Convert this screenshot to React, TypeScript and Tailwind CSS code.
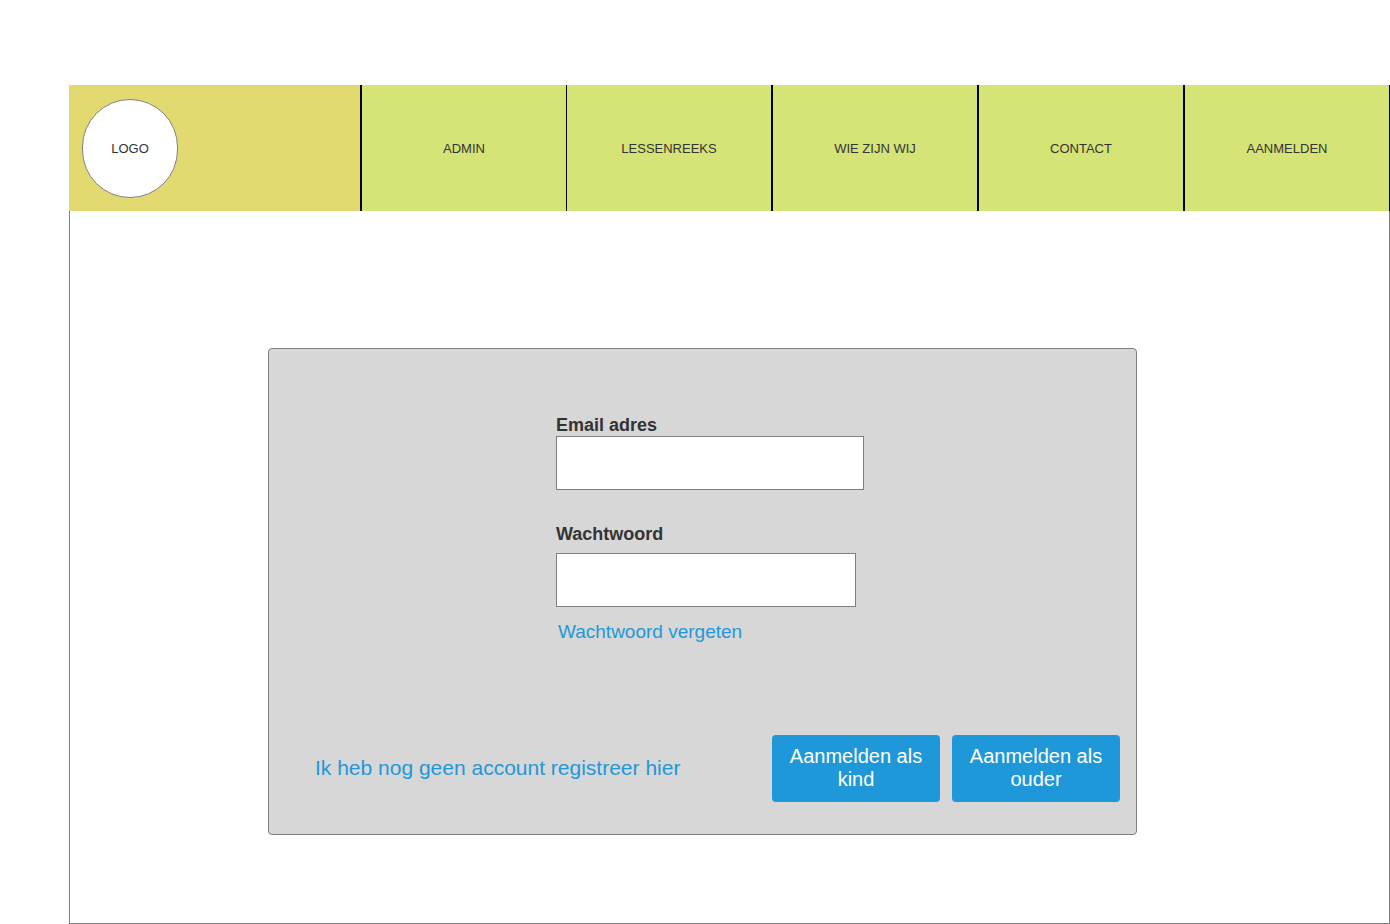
const FONT = "font-['Liberation_Sans',Arial,sans-serif]";

const navItems = [
  { label: "ADMIN", cls: "w-[205px] border-r-1" },
  { label: "LESSENREEKS", cls: "w-[206px] border-r-2" },
  { label: "WIE ZIJN WIJ", cls: "w-[206px] border-r-2" },
  { label: "CONTACT", cls: "w-[206px] border-r-2" },
  { label: "AANMELDEN", cls: "w-[205px] border-r-1" },
];

export default function App() {
  return (
    <div className={`${FONT} h-[924px] w-[1390px] overflow-hidden bg-white pl-[69px] pt-[85px] text-[#333333]`}>
      <header className="flex h-[126px] w-[1321px]">
        <div className="flex w-[293px] items-center border-r-2 border-black bg-[#e3d971] pl-[13px]">
          <div className="flex h-[99px] w-[96px] items-center justify-center rounded-full border border-[#808080] bg-white pt-[2px] text-[13px]">
            LOGO
          </div>
        </div>
        {navItems.map((item) => (
          <div
            key={item.label}
            className={`flex items-center justify-center border-black bg-[#d6e376] pt-[2px] text-[13px] ${item.cls}`}
          >
            {item.label}
          </div>
        ))}
      </header>
      <main className="h-[713px] w-[1321px] border-x border-b border-[#808080] pl-[198px] pt-[137px]">
        <section className="flex h-[487px] w-[869px] flex-col rounded-[4px] border border-[#808080] bg-[#d7d7d7]">
          <div className="flex flex-col items-start pl-[287px] pt-[66px]">
            <label className="text-[18px] leading-[21px] font-bold">Email adres</label>
            <div className="h-[54px] w-[308px] border border-[#808080] bg-white" />
            <label className="mt-[34px] text-[18px] leading-[21px] font-bold">Wachtwoord</label>
            <div className="mt-[8px] h-[54px] w-[300px] border border-[#808080] bg-white" />
            <a className="ml-[2px] mt-[14px] text-[19px] leading-[21px] text-[#1e98d8]">Wachtwoord vergeten</a>
          </div>
          <div className="mt-[93px] flex items-center pl-[46px]">
            <a className="mb-[2px] w-[457px] text-[21px] leading-[23px] text-[#1e98d8]">Ik heb nog geen account registreer hier</a>
            <div className="flex gap-[12px]">
              <button className="h-[67px] w-[168px] rounded-[4px] bg-[#1f98d9] px-[12px] pb-[2px] text-[20px] leading-[23px] text-white">
                Aanmelden als kind
              </button>
              <button className="h-[67px] w-[168px] rounded-[4px] bg-[#1f98d9] px-[12px] pb-[2px] text-[20px] leading-[23px] text-white">
                Aanmelden als ouder
              </button>
            </div>
          </div>
        </section>
      </main>
    </div>
  );
}
